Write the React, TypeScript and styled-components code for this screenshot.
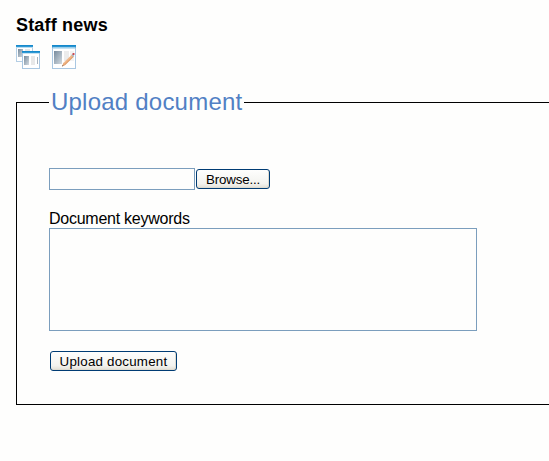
import React from "react";
import styled, { createGlobalStyle } from "styled-components";

const GlobalStyle = createGlobalStyle`
  html, body { margin: 0; background: #fefefd; overflow: hidden; }
  body { font-family: "Liberation Sans", Arial, sans-serif; color: #000; }
`;

const Page = styled.main`
  box-sizing: border-box;
  height: 461px;
  padding: 14px 0 0 16px;
`;

const Title = styled.h1`
  margin: 0;
  font-size: 18px;
  line-height: 22px;
  letter-spacing: 0.18px;
`;

const Toolbar = styled.div`
  display: flex;
  gap: 12px;
  margin-top: 9px;

  svg { display: block; }
`;

const Group = styled.fieldset`
  box-sizing: border-box;
  height: 317px;
  margin: 19px 0 0;
  padding: 51px 0 0 32px;
  border: 1px solid #000;
  border-right: 0;
`;

const Legend = styled.legend`
  width: 195px;
  box-sizing: border-box;
  padding: 0 0 2px 2px;
  color: #5180c4;
  font-size: 24px;
  line-height: 27px;
  letter-spacing: 0.22px;
  white-space: nowrap;
`;

const FileRow = styled.div`
  display: flex;
  align-items: center;
  gap: 1px;
  height: 22px;
`;

const FileField = styled.input`
  box-sizing: border-box;
  width: 146px;
  height: 22px;
  margin: 0;
  padding: 2px;
  border: 1px solid #7b9ebd;
  border-radius: 0;
  background: #fefefd;
  outline: none;
`;

const Button = styled.button<{ $width: number; $spacing: number }>`
  box-sizing: border-box;
  display: block;
  width: ${(p) => p.$width}px;
  height: 20px;
  margin: 0;
  padding: 1px 0 0;
  border: 1px solid #003c74;
  border-radius: 3px;
  background: linear-gradient(#fefefd, #f3f3ef 75%, #e2dfd5);
  box-shadow: inset -1px -1px 0 #dedbd0;
  color: #000;
  font: 13.33px/16px "Liberation Sans", Arial, sans-serif;
  letter-spacing: ${(p) => p.$spacing}px;
  white-space: nowrap;
`;

const Label = styled.label`
  display: block;
  margin-top: 19px;
  font-size: 16px;
  line-height: 19px;
  letter-spacing: -0.25px;
`;

const Keywords = styled.textarea`
  box-sizing: border-box;
  display: block;
  width: 428px;
  height: 103px;
  margin: 0 0 20px;
  padding: 2px;
  border: 1px solid #7b9ebd;
  border-radius: 0;
  background: #fefefd;
  resize: none;
  outline: none;
`;

const Submit = styled(Button)`
  margin-left: 1px;
`;

const Gradients = () => (
  <defs>
    <linearGradient id="pane" x1="0" y1="0" x2="1" y2="1">
      <stop offset="0" stopColor="#778b9d" />
      <stop offset="1" stopColor="#d3dbe1" />
    </linearGradient>
    <linearGradient id="bar" x1="0" y1="0" x2="0" y2="1">
      <stop offset="0" stopColor="#0b82c8" />
      <stop offset="1" stopColor="#3aa0d8" />
    </linearGradient>
  </defs>
);

const WindowsIcon = () => (
  <svg width="24" height="24" viewBox="0 0 24 24">
    <Gradients />
    <rect x=".5" y=".5" width="16" height="16" fill="#fff" stroke="#b4cee4" />
    <rect width="17" height="2" fill="url(#bar)" />
    <rect y="2" width="17" height="1" fill="#b9dcf0" />
    <rect x="2" y="4" width="5" height="8" fill="url(#pane)" />
    <rect x="9" y="4" width="5" height="4" fill="#e6e7e8" />
    <rect x="6.5" y="6.5" width="17" height="17" fill="#fff" stroke="#a9c7e2" />
    <rect x="6" y="6" width="18" height="2" fill="url(#bar)" />
    <rect x="7" y="8" width="16" height="1" fill="#c5e2f2" />
    <rect x="8" y="11" width="5" height="9" fill="url(#pane)" />
    <rect x="15" y="11" width="4" height="9" fill="#e8e8e8" />
    <rect x="21" y="12" width="1" height="7" fill="#a9b3bd" />
  </svg>
);

const EditIcon = () => (
  <svg width="24" height="24" viewBox="0 0 24 24">
    <rect x=".5" y=".5" width="23" height="23" fill="#fff" stroke="#a9c7e2" />
    <rect width="24" height="2.5" fill="url(#bar)" />
    <rect x="1" y="3" width="22" height="1" fill="#c5e2f2" />
    <rect x="2" y="6" width="8" height="13" fill="url(#pane)" />
    <rect x="12" y="6" width="5" height="10" fill="#ececec" />
    <rect x="18" y="6" width="4" height="10" fill="#f3f3f3" />
    <path d="M10 21.5l1.3-3.5 8.5-8.2 2 2-8.5 8.2z" fill="#eaaa78" />
    <path d="M12 18.3l8.2-7.9" stroke="#f8cba5" strokeWidth=".8" />
    <path d="M12.4 20.2l8.5-8.2" stroke="#c98a5c" strokeWidth=".4" />
    <path d="M10 21.5l.6-1.6 1 .9z" fill="#6d5142" />
    <path d="M19.3 10.1l1.2-1.1 1.9 1.9-1.1 1.1z" fill="#a9b9c7" />
    <rect x="20.5" y="8" width="2" height="2" rx=".5" fill="#cb4951" />
  </svg>
);

export default function App() {
  return (
    <Page>
      <GlobalStyle />
      <Title>Staff news</Title>
      <Toolbar>
        <WindowsIcon />
        <EditIcon />
      </Toolbar>
      <Group>
        <Legend>Upload document</Legend>
        <FileRow>
          <FileField aria-label="Document" />
          <Button type="button" $width={74} $spacing={-0.15}>Browse...</Button>
        </FileRow>
        <Label htmlFor="keywords">Document keywords</Label>
        <Keywords id="keywords" />
        <Submit type="button" $width={127} $spacing={0.22}>Upload document</Submit>
      </Group>
    </Page>
  );
}
